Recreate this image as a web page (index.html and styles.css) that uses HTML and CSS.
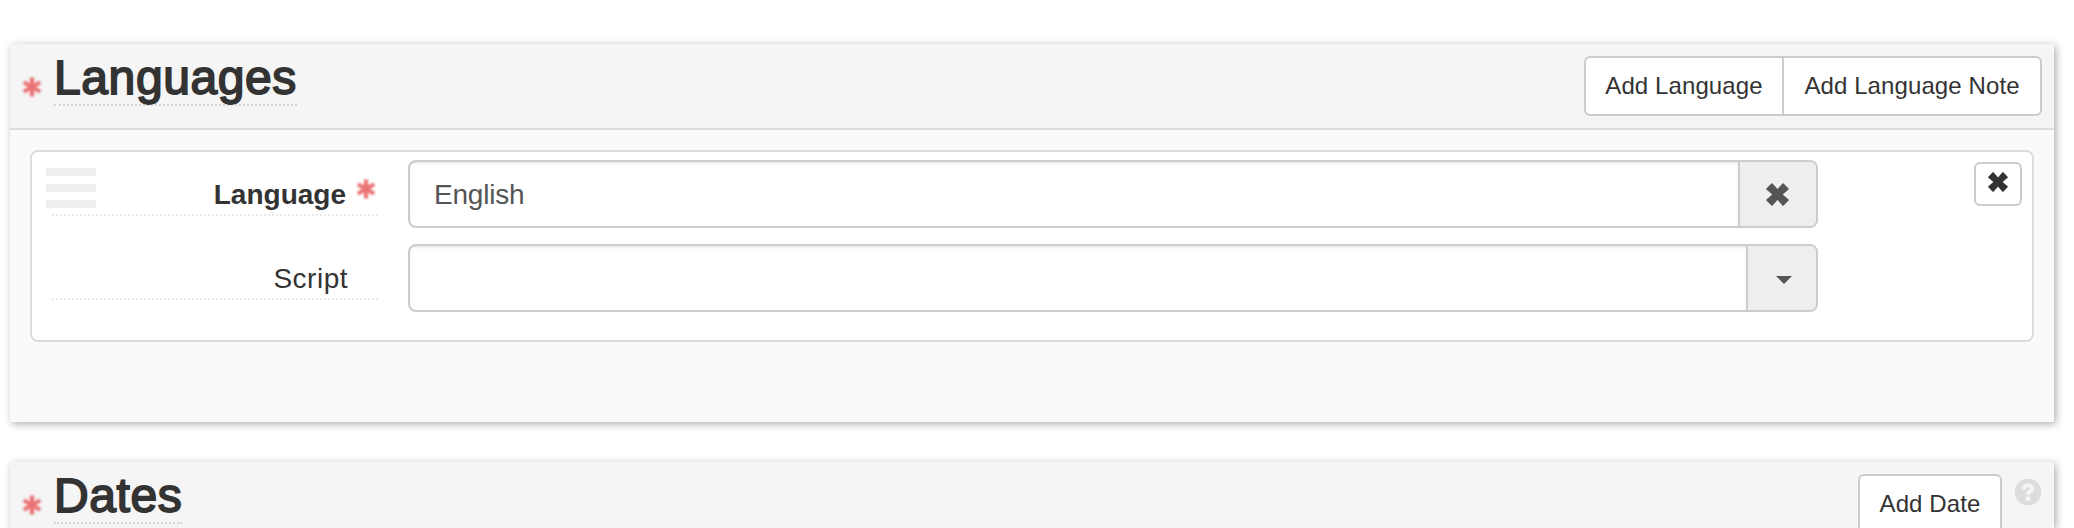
FILE: index.html
```html
<!DOCTYPE html>
<html lang="en">
<head>
<meta charset="utf-8">
<title>Languages</title>
<link rel="stylesheet" href="styles.css">
</head>
<body>
<svg width="0" height="0" class="defs">
  <symbol id="remove" viewBox="0 0 58 58">
    <path d="M2.500 15 15 2.500 29 18.500 43 2.500 55.500 15 39.500 29 55.500 43 43 55.500 29 39.500 15 55.500 2.500 43 18.500 29Z" fill="currentColor" stroke="currentColor" stroke-width="4" stroke-linejoin="round"/>
  </symbol>
  <symbol id="required" viewBox="0 0 24 24">
    <path d="M12 2.500V21.500M3.800 7.300 20.200 16.700M20.200 7.300 3.800 16.700" fill="none" stroke="currentColor" stroke-width="4.200"/>
  </symbol>
</svg>

<section class="panel languages">
  <header class="panel-head">
    <svg class="required"><use href="#required"/></svg>
    <h2 class="title">Languages</h2>
    <div class="actions">
      <button class="btn btn-language">Add Language</button>
      <button class="btn btn-note">Add Language Note</button>
    </div>
  </header>
  <div class="panel-body">
    <div class="record">
      <div class="drag-handle"><i></i><i></i><i></i></div>
      <div class="field">
        <label class="label label-required"><span>Language</span><svg class="required"><use href="#required"/></svg></label>
        <div class="control">
          <div class="input">English</div>
          <div class="addon addon-clear"><svg class="icon-clear"><use href="#remove"/></svg></div>
        </div>
      </div>
      <div class="field">
        <label class="label"><span class="label-text">Script</span></label>
        <div class="control">
          <div class="input"></div>
          <div class="addon addon-menu"><span class="caret"></span></div>
        </div>
      </div>
      <button class="remove"><svg class="icon-remove"><use href="#remove"/></svg></button>
    </div>
  </div>
</section>

<section class="panel dates">
  <header class="panel-head">
    <svg class="required"><use href="#required"/></svg>
    <h2 class="title">Dates</h2>
    <div class="actions">
      <button class="btn btn-date">Add Date</button>
      <svg class="help" viewBox="0 0 28 28"><circle cx="14" cy="14" r="13.300" fill="#ddd"/><path d="M9.700 11.300C9.700 8.700 11.500 7.400 14 7.400C16.700 7.400 18.200 8.700 18.200 10.700C18.200 13.400 14 13.200 14 16.800" fill="none" stroke="#f5f5f5" stroke-width="3.900"/><path d="M11.700 18.600H16.300V23H11.700Z" fill="#f5f5f5"/></svg>
    </div>
  </header>
</section>
</body>
</html>
```
FILE: styles.css
```css
* {
  box-sizing: border-box;
}

body {
  margin: 0;
  height: 528px;
  overflow: hidden;
  padding: 44px 20px 0 10px;
  background: #fff;
  color: #333;
  font: 28px/40px "Liberation Sans", Arial, sans-serif;
}

.defs {
  position: absolute;
}

.panel {
  margin-bottom: 40px;
  background: #fafafa;
  box-shadow: 2px 2px 8px rgba(0, 0, 0, 0.33);
}

.languages {
  height: 378px;
}

.dates {
  height: 66px;
  margin-bottom: 0;
}

.panel-head {
  display: flex;
  align-items: flex-start;
  height: 86px;
  padding: 12px 12px 0 10px;
  background: #f5f5f5;
  border-bottom: 2px solid #ddd;
}

.required {
  flex: none;
  width: 24px;
  height: 24px;
  color: #eb7373;
  filter: blur(1px);
}

.panel-head .required {
  margin-top: 19px;
}

.title {
  height: 50px;
  margin: 0 0 0 10px;
  border-bottom: 2px dotted #d4d4d4;
  font-size: 48px;
  font-weight: 400;
  line-height: 43px;
  letter-spacing: 0.6px;
  -webkit-text-stroke: 1.8px #333;
}

.actions {
  display: flex;
  margin-left: auto;
}

.btn {
  height: 60px;
  padding: 0 0 1px;
  border: 2px solid #ccc;
  border-radius: 6px;
  background: #fff;
  color: #333;
  font: 24px "Liberation Sans", Arial, sans-serif;
  letter-spacing: 0.1px;
}

.btn-language {
  width: 200px;
  border-radius: 6px 0 0 6px;
}

.btn-note {
  width: 260px;
  margin-left: -2px;
  border-radius: 0 6px 6px 0;
}

.btn-date {
  width: 144px;
}

.help {
  width: 28px;
  height: 28px;
  margin: 4px 0 0 12px;
}

.panel-body {
  padding: 20px;
}

.record {
  position: relative;
  display: flex;
  flex-direction: column;
  gap: 16px;
  height: 192px;
  padding: 8px 0 0 20px;
  border: 2px solid #ddd;
  border-radius: 8px;
  background: #fff;
}

.drag-handle {
  position: absolute;
  top: 16px;
  left: 14px;
  display: grid;
  gap: 8px;
}

.drag-handle i {
  width: 50px;
  height: 8px;
  border-radius: 1px;
  background: #eee;
}

.field {
  display: flex;
  gap: 30px;
  height: 68px;
}

.label {
  display: flex;
  justify-content: flex-end;
  width: 326px;
  height: 56px;
  padding: 15px 30px 0 0;
  border-bottom: 2px dotted #eaeaea;
}

.label-required {
  padding-right: 0;
  font-weight: 700;
}

.label-text {
  letter-spacing: 0.5px;
}

.label .required {
  margin: 2px 0 0 8px;
}

.control {
  display: flex;
  width: 1410px;
  border: 2px solid #ccc;
  border-radius: 8px;
  overflow: hidden;
}

.input {
  flex: 1;
  padding: 13px 24px 0;
  box-shadow: inset 0 2px 2px rgba(0, 0, 0, 0.075);
  color: #555;
  letter-spacing: -0.2px;
}

.addon {
  display: flex;
  align-items: center;
  justify-content: center;
  border-left: 2px solid #ccc;
  background: #eee;
  color: #555;
}

.addon-clear {
  width: 78px;
  padding-right: 1px;
}

.icon-clear {
  width: 23px;
  height: 23px;
}

.addon-menu {
  width: 70px;
  padding: 4px 0 0 4px;
}

.caret {
  border: 8px solid transparent;
  border-top-color: #555;
  border-bottom: 0;
}

.remove {
  position: absolute;
  top: 10px;
  right: 10px;
  display: flex;
  justify-content: center;
  width: 48px;
  height: 44px;
  padding: 8px 0 0;
  border: 2px solid #ccc;
  border-radius: 6px;
  background: #fff;
  color: #333;
}

.icon-remove {
  width: 20px;
  height: 20px;
}
```
